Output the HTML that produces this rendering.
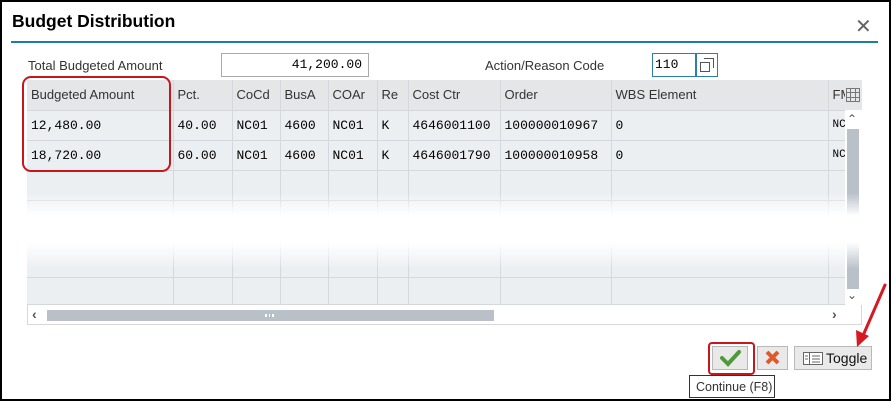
<!DOCTYPE html>
<html><head><meta charset="utf-8"><style>
*{margin:0;padding:0;box-sizing:border-box}
body{width:891px;height:401px;background:#fff;position:relative;overflow:hidden;font-family:"Liberation Sans",sans-serif;color:#333}
.frame{position:absolute;left:0;top:0;width:891px;height:401px;border:2px solid #000;border-right-width:2px}
.title{position:absolute;left:12px;top:11px;font-size:17.5px;font-weight:bold;color:#000}
.line{position:absolute;left:11px;top:41px;width:867px;height:2px;background:#1b7ea3}
.close{position:absolute;left:855px;top:14px;font-size:20px;color:#666}
.lbl{position:absolute;font-size:13px;color:#333}
.inp{position:absolute;border:1px solid #aaa;background:#fff;font-family:"Liberation Mono",monospace;font-size:13px;color:#000;padding:3px 6px}
table{position:absolute;left:27px;top:80px;border-collapse:collapse;table-layout:fixed}
td{height:30px;border-right:1px solid #d4d8dc;border-bottom:1px solid #d4d8dc;background:#eceff2;padding-left:4px;white-space:nowrap;overflow:hidden;font-size:13px}
tr.h td{background:#e4e6e8;color:#333;font-size:13px}
tr.d td{font-family:"Liberation Mono",monospace;color:#000}
tr.t5 td{height:77px}
tr.t6 td{height:27px}
.fade{position:absolute;left:27px;top:193px;width:834px;height:76px;background:linear-gradient(#fff0 0%,#fff 30%,#fff 65%,#fff0 100%)}
.btn{position:absolute;top:346px;height:24px;background:#e9e9e9;border:1px solid #b9b9b9}
</style></head><body>
<div class="frame"></div>
<div class="title">Budget Distribution</div>
<div class="line"></div>
<div class="close">✕</div>
<div class="lbl" style="left:28px;top:58px">Total Budgeted Amount</div>
<div class="inp" style="left:221px;top:53px;width:148px;height:24px;text-align:right">41,200.00</div>
<div class="lbl" style="left:485px;top:58px">Action/Reason Code</div>
<div class="inp" style="left:652px;top:53px;width:44px;height:24px;border-color:#2a7fb0;padding-left:2px">110</div>
<div style="position:absolute;left:696px;top:53px;width:22px;height:24px;border:1px solid #2a7fb0"><div style="position:absolute;left:3px;top:8px;width:10px;height:10px;border:1.5px solid #555"></div><div style="position:absolute;left:7px;top:4px;width:10px;height:10px;border-top:1.5px solid #555;border-right:1.5px solid #555"></div></div>
<table>
<colgroup><col style="width:146px"><col style="width:59px"><col style="width:48px"><col style="width:48px"><col style="width:49px"><col style="width:31px"><col style="width:92px"><col style="width:111px"><col style="width:217px"><col style="width:17px"></colgroup>
<tr class="h"><td>Budgeted Amount</td><td>Pct.</td><td>CoCd</td><td>BusA</td><td>COAr</td><td>Re</td><td>Cost Ctr</td><td>Order</td><td>WBS Element</td><td>FM</td></tr>
<tr class="d"><td>12,480.00</td><td>40.00</td><td>NC01</td><td>4600</td><td>NC01</td><td>K</td><td>4646001100</td><td>100000010967</td><td>0</td><td style="font-size:11px">NC</td></tr>
<tr class="d"><td>18,720.00</td><td>60.00</td><td>NC01</td><td>4600</td><td>NC01</td><td>K</td><td>4646001790</td><td>100000010958</td><td>0</td><td style="font-size:11px">NC</td></tr>
<tr class="d"><td></td><td></td><td></td><td></td><td></td><td></td><td></td><td></td><td></td><td></td></tr>
<tr class="d t5"><td></td><td></td><td></td><td></td><td></td><td></td><td></td><td></td><td></td><td></td></tr>
<tr class="d t6"><td></td><td></td><td></td><td></td><td></td><td></td><td></td><td></td><td></td><td></td></tr>
</table>
<div style="position:absolute;left:845px;top:80px;width:17px;height:30px;background:#e4e6e8"></div>
<svg style="position:absolute;left:846px;top:88px" width="14" height="14"><rect x="0.5" y="0.5" width="13" height="13" fill="none" stroke="#777"/><path d="M0 4.5H14M4.5 0V14M9.5 0V14M0 9.5H14" stroke="#777"/></svg>
<div style="position:absolute;left:845px;top:110px;width:17px;height:195px;background:#fff"></div>
<div style="position:absolute;left:847px;top:129px;width:12px;height:160px;background:#b9c0c8"></div>
<div style="position:absolute;left:847px;top:112px;font-size:12px;color:#555">⌃</div>
<div style="position:absolute;left:847px;top:288px;font-size:12px;color:#555">⌄</div>
<div class="fade"></div>
<div style="position:absolute;left:27px;top:305px;width:835px;height:20px;border:1px solid #d8d8d8;border-top:none;background:#fff"></div>
<div style="position:absolute;left:47px;top:310px;width:447px;height:11px;background:#b9c0c8"></div>
<div style="position:absolute;left:265px;top:314px;width:9px;height:3px;border-left:2px solid #fff;border-right:2px solid #fff;background:linear-gradient(90deg,transparent 2px,#fff 2px,#fff 3px,transparent 3px)"></div>
<div style="position:absolute;left:32px;top:306px;font-size:14px;font-weight:bold;color:#555">‹</div>
<div style="position:absolute;left:832px;top:306px;font-size:14px;font-weight:bold;color:#555">›</div>
<div style="position:absolute;left:22px;top:76px;width:149px;height:96px;border:2px solid #c8161d;border-radius:9px"></div>
<div class="btn" style="left:712px;width:36px"><svg width="34" height="22"><path d="M9 11L15 17L26 5" stroke="#4f9a3a" stroke-width="4" fill="none" stroke-linecap="round"/></svg></div>
<div style="position:absolute;left:708px;top:342px;width:47px;height:33px;border:2px solid #c8161d;border-radius:4px"></div>
<div class="btn" style="left:757px;width:31px"><svg width="29" height="22"><path d="M9 5L20 16M20 5L9 16" stroke="#e2582a" stroke-width="4"/></svg></div>
<div class="btn" style="left:794px;width:78px;font-size:14px;color:#111"><svg style="position:absolute;left:8px;top:5px" width="20" height="13"><rect x="0.5" y="0.5" width="19" height="12" fill="#fff" stroke="#666"/><path d="M6.5 0V13M9 4H17M9 7H17M9 10H17M2 4H5M2 7H5" stroke="#666"/></svg><span style="position:absolute;left:31px;top:3px">Toggle</span></div>
<div style="position:absolute;left:689px;top:375px;width:86px;height:23px;border:1px solid #333;background:#fff;font-size:12.5px;color:#333;padding:4px 0 0 6px">Continue (F8)</div>
<svg style="position:absolute;left:850px;top:280px" width="41" height="72"><path d="M35 5L12 58" stroke="#d71920" stroke-width="3" stroke-linecap="round"/><path d="M7 67L6 50L19 56Z" fill="#d71920"/></svg>
</body></html>
